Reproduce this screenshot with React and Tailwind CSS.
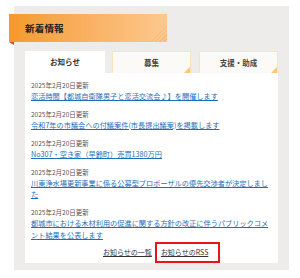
import React from 'react';

const news = [
  { date: '2025年2月20日更新', title: '恋活時間【都城自衛隊男子と恋活交流会♪】を開催します' },
  { date: '2025年2月20日更新', title: '令和7年の市議会への付議案件(市長提出議案)を掲載します' },
  { date: '2025年2月20日更新', title: 'No307・空き家（早鈴町）売買1380万円' },
  { date: '2025年2月20日更新', title: '川東浄水場更新事業に係る公募型プロポーザルの優先交渉者が決定しました' },
  { date: '2025年2月20日更新', title: '都城市における木材利用の促進に関する方針の改正に伴うパブリックコメント結果を公表します' },
];

function Tab({ label, active, className }) {
  if (active) {
    return (
      <div className={`h-[22px] bg-white flex items-center justify-center text-[7.5px] font-bold text-[#333] ${className}`}>
        {label}
      </div>
    );
  }
  return (
    <div className={`relative h-[22px] bg-[#fbfaf7] border border-b-0 border-[#fde3b9] flex items-center justify-center text-[7.5px] font-bold text-[#444] ${className}`}>
      {label}
      <span className="absolute right-0 bottom-0 w-[6px] h-[6px] bg-[#fbc678] [clip-path:polygon(100%_0,100%_100%,0_100%)]" />
    </div>
  );
}

export default function App() {
  return (
    <div className="w-[300px] h-[278px] bg-white pt-[6px] pl-[14px] font-['Noto_Sans_CJK_JP',sans-serif]">
      <div className="w-[275px] h-[264px] bg-[#edecea] pt-[8px] px-[11px] pb-[8px] flex flex-col">
        {/* 見出しリボン */}
        <div className="relative -ml-[16px] w-[158px] h-[28px] shrink-0 bg-gradient-to-r from-[#f49a28] to-[#fdc88d] flex items-center pl-[16px]">
          <span className="text-[9.5px] font-bold text-[#222] tracking-[0.2px]">新着情報</span>
          <span className="absolute right-0 bottom-0 w-[18px] h-[20px] bg-[repeating-linear-gradient(135deg,rgba(240,150,60,0.25)_0,rgba(240,150,60,0.25)_1px,transparent_1px,transparent_3px)] [clip-path:polygon(100%_0,100%_100%,0_100%)]" />
          <span className="absolute left-0 top-full w-[5px] h-[3px] bg-[#d9481c] [clip-path:polygon(0_0,100%_0,100%_100%)]" />
        </div>

        {/* タブ */}
        <div className="mt-[9px] flex shrink-0">
          <Tab label="お知らせ" active className="w-[80px]" />
          <Tab label="募集" className="w-[79px] ml-[7px]" />
          <Tab label="支援・助成" className="w-[79px] ml-[8px]" />
        </div>

        {/* 一覧 */}
        <div className="flex-1 bg-white px-[6px] pt-[6.5px]">
          {news.map((n, i) => (
            <div key={i} className={i > 0 ? 'mt-[6.5px]' : ''}>
              <p className="text-[6.5px] leading-[11px] text-[#555]">{n.date}</p>
              <a href="#" className="block text-[7.2px] leading-[11.5px] text-[#1f6fb8] underline underline-offset-[1px]">
                {n.title}
              </a>
            </div>
          ))}
          <div className="mt-[1px] flex items-center pl-[72px] text-[7px] text-[#333]">
            <a href="#" className="underline underline-offset-[1px]">お知らせの一覧</a>
            <span className="ml-[3px] h-[21px] border-2 border-[#e8141b] pl-[4px] pr-[10px] flex items-center">
              <a href="#" className="underline underline-offset-[1px]">お知らせのRSS</a>
            </span>
          </div>
        </div>
      </div>
    </div>
  );
}
